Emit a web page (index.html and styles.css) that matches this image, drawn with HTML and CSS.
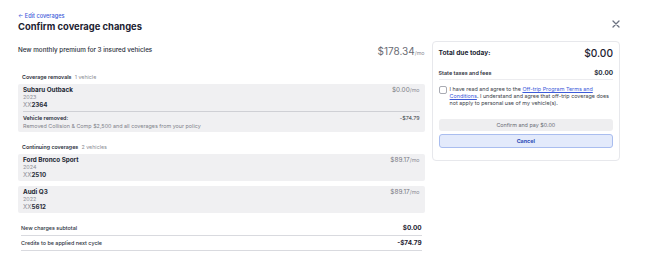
FILE: index.html
```html
<!DOCTYPE html>
<html lang="en">

<head>
    <meta charset="UTF-8">
    <meta name="viewport" content="width=device-width, initial-scale=1.0">
    <title>Confirm coverage changes</title>
    <link rel="stylesheet" href="styles.css">
</head>

<body>
    <div class="page">
        <div class="top">
            <div>
                <a class="back" href="#">&larr; Edit coverages</a>
                <h1>Confirm coverage changes</h1>
            </div>
            <button class="close" aria-label="Close">
                <svg width="8" height="8" viewBox="0 0 8 8">
                    <path d="M1 1L7 7M7 1L1 7" stroke="#6b7180" stroke-width="1.3" stroke-linecap="round" />
                </svg>
            </button>
        </div>

        <div class="layout">
            <div class="summary">
                <div class="premium">
                    <span class="premium-label">New monthly premium for 3 insured vehicles</span>
                    <span class="premium-price">$178.34<small>/mo</small></span>
                </div>

                <div class="section-label">Coverage removals <span>1 vehicle</span></div>
                <div class="vehicle">
                    <div class="vehicle-head">
                        <div>
                            <div class="vehicle-name">Subaru Outback</div>
                            <div class="vehicle-year">2023</div>
                            <div class="vehicle-plate"><span>XX</span>2364</div>
                        </div>
                        <div class="vehicle-price">$0.00<small>/mo</small></div>
                    </div>
                    <div class="vehicle-note">
                        <div>
                            <div class="note-title">Vehicle removed:</div>
                            <div class="note-text">Removed Collision &amp; Comp $2,500 and all coverages from your policy</div>
                        </div>
                        <div class="note-amount">-$74.79</div>
                    </div>
                </div>

                <div class="section-label continuing">Continuing coverages <span>2 vehicles</span></div>
                <div class="vehicle">
                    <div class="vehicle-head">
                        <div>
                            <div class="vehicle-name">Ford Bronco Sport</div>
                            <div class="vehicle-year">2024</div>
                            <div class="vehicle-plate"><span>XX</span>2510</div>
                        </div>
                        <div class="vehicle-price">$89.17<small>/mo</small></div>
                    </div>
                </div>
                <div class="vehicle">
                    <div class="vehicle-head">
                        <div>
                            <div class="vehicle-name">Audi Q3</div>
                            <div class="vehicle-year">2022</div>
                            <div class="vehicle-plate"><span>XX</span>5612</div>
                        </div>
                        <div class="vehicle-price">$89.17<small>/mo</small></div>
                    </div>
                </div>

                <div class="totals">
                    <div class="total-row">
                        <span>New charges subtotal</span>
                        <strong>$0.00</strong>
                    </div>
                    <div class="total-row">
                        <span>Credits to be applied next cycle</span>
                        <strong>-$74.79</strong>
                    </div>
                </div>
            </div>

            <div class="pay-card">
                <div class="due">
                    <span>Total due today:</span>
                    <strong>$0.00</strong>
                </div>
                <div class="fees">
                    <span>State taxes and fees</span>
                    <strong>$0.00</strong>
                </div>
                <label class="agree">
                    <input type="checkbox">
                    <span>I have read and agree to the <a href="#">Off-trip Program Terms and Conditions</a>. I understand and agree that off-trip coverage does not apply to personal use of my vehicle(s).</span>
                </label>
                <button class="btn confirm">Confirm and pay $0.00</button>
                <button class="btn cancel">Cancel</button>
            </div>
        </div>
    </div>
</body>

</html>
```

FILE: styles.css
```css
body {
    margin: 0;
    font-family: Inter, "Noto Sans", sans-serif;
    color: #1d2230;
    background-color: #ffffff;
}

.page {
    width: 602px;
    padding: 12px 0 0 18px;
}

.top {
    display: flex;
    justify-content: space-between;
    align-items: flex-start;
}

.back {
    display: block;
    font-size: 5.6px;
    line-height: 8px;
    font-weight: 500;
    color: #3d5bd9;
    text-decoration: none;
}

h1 {
    margin: 0;
    font-size: 9.4px;
    line-height: 14px;
    font-weight: 700;
    color: #1c2231;
}

.close {
    border: none;
    background: none;
    padding: 0;
    margin: 8px 0 0 0;
    width: 8px;
    height: 8px;
    display: flex;
}

.layout {
    display: flex;
    gap: 7px;
    margin-top: 7px;
}

.summary {
    width: 408px;
}

.premium {
    height: 20px;
    display: flex;
    justify-content: space-between;
    align-items: center;
}

.premium-label {
    font-size: 6.3px;
    font-weight: 500;
    color: #2a2f3b;
    margin-top: -2px;
}

.premium-price {
    font-size: 10px;
    color: #6a6c74;
}

.premium-price small,
.vehicle-price small {
    font-size: 5.4px;
    color: #8a8c94;
}

.section-label {
    margin: 12px 0 3px 4px;
    line-height: 8px;
    font-size: 5.3px;
    font-weight: 600;
    color: #2a2f3b;
}

.section-label span {
    font-weight: 400;
    color: #8a8c94;
    margin-left: 2px;
}

.section-label.continuing {
    margin-top: 11px;
}

.vehicle {
    background-color: #f0f0f2;
    border-radius: 2px;
    padding: 2px 5px;
    margin-bottom: 5px;
}

.vehicle-head {
    display: flex;
    justify-content: space-between;
}

.vehicle-name {
    font-size: 6.3px;
    line-height: 8px;
    font-weight: 700;
    color: #222733;
}

.vehicle-year {
    font-size: 5.4px;
    line-height: 7px;
    color: #8d8f97;
}

.vehicle-plate {
    font-size: 6.2px;
    line-height: 8px;
    font-weight: 700;
    color: #2a2f3b;
}

.vehicle-plate span {
    font-weight: 400;
    color: #8d8f97;
}

.vehicle-price {
    font-size: 6.4px;
    line-height: 8px;
    color: #777981;
}

.vehicle-note {
    display: flex;
    justify-content: space-between;
    border-top: 1px solid #cfd0d5;
    margin-top: 2px;
    padding-top: 2px;
}

.note-title {
    font-size: 5.4px;
    line-height: 8px;
    font-weight: 600;
    color: #2a2f3b;
}

.note-text {
    font-size: 5.4px;
    line-height: 8px;
    color: #80828a;
}

.note-amount {
    font-size: 5.4px;
    line-height: 8px;
    color: #3a3e48;
}

.totals {
    margin: 8px 3px 0 3px;
}

.total-row {
    display: flex;
    justify-content: space-between;
    align-items: center;
    height: 14px;
    border-bottom: 1px solid #d9dadf;
    font-size: 5.4px;
    font-weight: 500;
    color: #2a2f3b;
}

.total-row strong {
    font-size: 6.4px;
    font-weight: 700;
    color: #1d2230;
}

.pay-card {
    width: 175px;
    border: 1px solid #e7e8ec;
    border-radius: 4px;
    padding: 3px 6px 12px 6px;
    align-self: flex-start;
}

.due {
    display: flex;
    justify-content: space-between;
    align-items: center;
    height: 16px;
}

.due span {
    font-size: 6.6px;
    font-weight: 700;
    color: #222733;
}

.due strong {
    font-size: 10.2px;
    font-weight: 500;
    color: #1d2230;
}

.fees {
    display: flex;
    justify-content: space-between;
    align-items: center;
    height: 12px;
    margin-top: 6px;
    border-bottom: 1px solid #ececef;
    font-size: 5.4px;
    font-weight: 600;
    color: #2a2f3b;
}

.fees strong {
    font-size: 6.4px;
    font-weight: 700;
}

.agree {
    display: flex;
    gap: 3px;
    margin-top: 6px;
    font-size: 5.4px;
    line-height: 7px;
    color: #3a3e48;
}

.agree input {
    appearance: none;
    flex: none;
    width: 8px;
    height: 8px;
    margin: 0;
    border: 1px solid #a9abb3;
    border-radius: 2px;
    box-sizing: border-box;
    background-color: #ffffff;
}

.agree a {
    color: #3d5bd9;
}

.btn {
    display: block;
    width: 100%;
    font-family: inherit;
    font-size: 5.4px;
    border-radius: 3px;
    box-sizing: border-box;
}

.confirm {
    margin-top: 12px;
    height: 12px;
    border: none;
    background-color: #eeeef0;
    color: #6a6c74;
}

.cancel {
    margin-top: 3px;
    height: 14px;
    border: 1px solid #a9bdef;
    background-color: #e3eafb;
    color: #2d4cb8;
    font-weight: 700;
}
```
